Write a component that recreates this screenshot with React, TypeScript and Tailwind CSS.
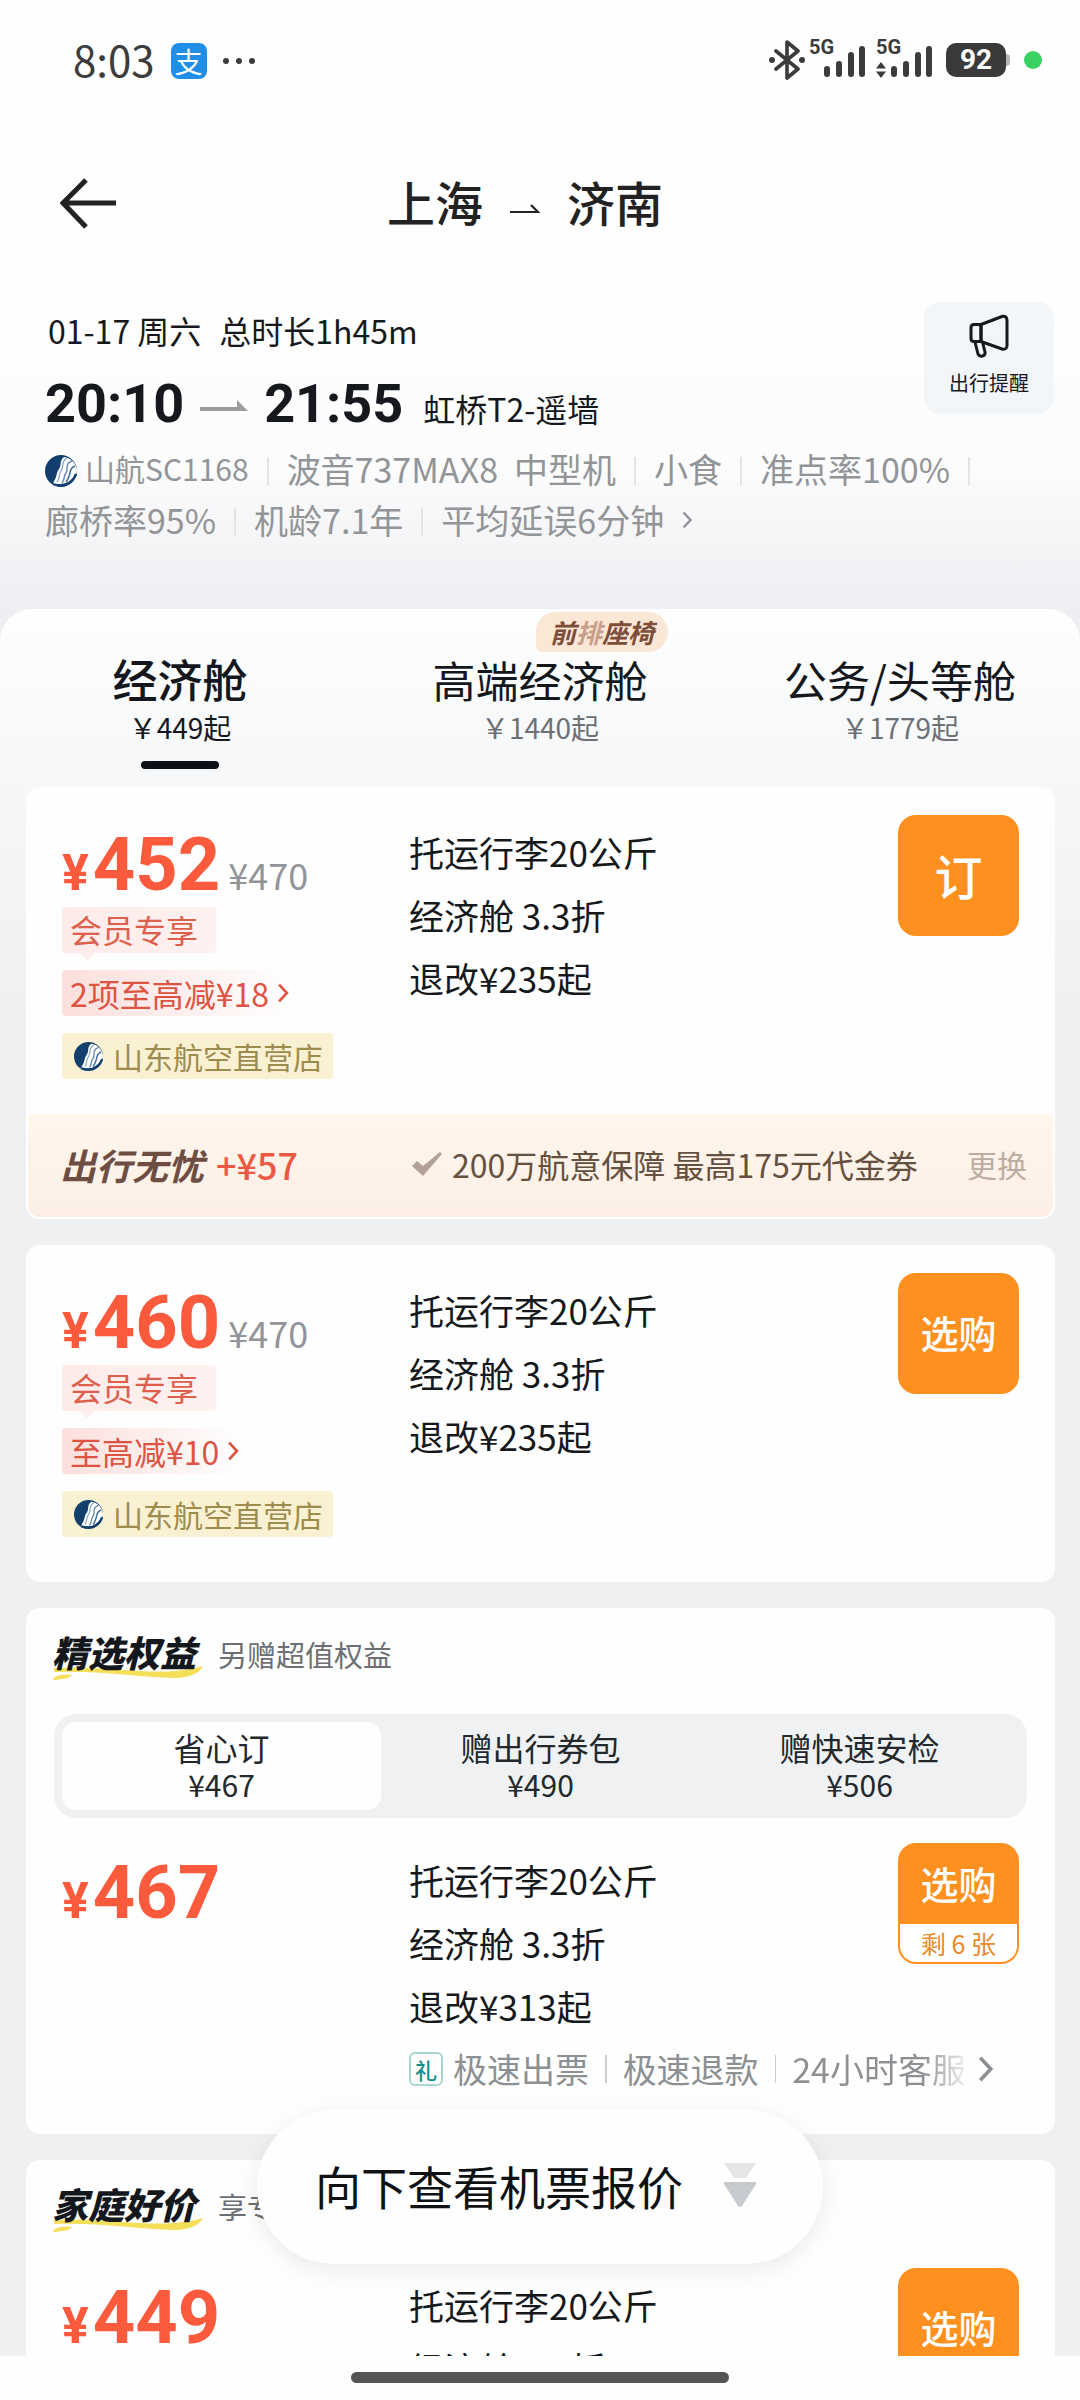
import React, { useState } from 'react';
import clsx from 'clsx';

const cabins = [
  { name: '经济舱', price: '￥449起' },
  { name: '高端经济舱', price: '￥1440起', badge: true },
  { name: '公务/头等舱', price: '￥1779起' },
];

const bundles = [
  { name: '省心订', price: '¥467' },
  { name: '赠出行券包', price: '¥490' },
  { name: '赠快速安检', price: '¥506' },
];

const AirlineLogo = ({ className }: { className: string }) => (
  <svg viewBox="0 0 32 32" className={className} aria-hidden="true">
    <circle cx="16" cy="16" r="16" fill="#123f6e" />
    <path d="M19 2c-5 4-2 8-5 12s-2 8-5 12l-1 3h12c7-1 12-7 12-14C31 8 26 3 19 2z" fill="#fff" />
    <path d="M22 3c-7 4-2 8-6 13-3 4-1 8-4 11" fill="none" stroke="#7f9fbd" strokeWidth="1.2" />
    <path d="M27 6c-8 3-3 8-6 12-3 4-1 7-4 10" fill="none" stroke="#5c83a9" strokeWidth="1.4" />
    <path d="M30 11c-6 2-4 6-6 10-1 3-2 5-3 6" fill="none" stroke="#3f6c98" strokeWidth="1.6" />
    <path d="M8 29c8 3 19 1 23-10" fill="none" stroke="#123f6e" strokeWidth="2.4" />
  </svg>
);

const Chevron = ({ className }: { className: string }) => (
  <svg viewBox="0 0 10 18" className={className} fill="none" stroke="currentColor" strokeWidth="2.4" aria-hidden="true">
    <path d="M1.5 1.5 8.5 9l-7 7.5" />
  </svg>
);

const Signal = ({ data }: { data?: boolean }) => (
  <span className="relative block h-10 w-14">
    <span className="absolute left-0 top-0 font-[Roboto] text-[20px] font-bold leading-[14px]">5G</span>
    <svg viewBox="0 0 56 40" className="h-10 w-14" fill="none" stroke="currentColor" strokeWidth="6" strokeLinecap="round" aria-hidden="true">
      <path d="M18 29v5M30 24v10M42 15v19M53 9v25" />
      {data && <path d="M0 28.500 5 22l5 6.500zM0 31.500 5 38l5-6.500z" fill="currentColor" stroke="none" />}
    </svg>
  </span>
);

const StatusBar = () => (
  <div className="flex h-[122px] items-center justify-between pl-[73px] pr-[38px] text-[#3c3c3c]">
    <div className="flex items-center gap-4">
      <span className="pb-1 text-[42px] leading-none">8:03</span>
      <span className="flex h-9 w-9 items-center justify-center rounded-lg bg-[#1f8ee6] text-[28px] leading-none text-white">
        支
      </span>
      <svg viewBox="0 0 32 6" className="h-[6px] w-8" fill="currentColor" aria-hidden="true">
        <circle cx="3" cy="3" r="3" />
        <circle cx="16" cy="3" r="3" />
        <circle cx="29" cy="3" r="3" />
      </svg>
    </div>
    <div className="flex items-center pb-[2px]">
      <svg viewBox="0 0 36 40" className="mr-1 h-10 w-9" fill="none" stroke="currentColor" strokeWidth="3.600" strokeLinejoin="round" strokeLinecap="round" aria-hidden="true">
        <path d="M7 11l22 18-11 9V2l11 9L7 29" />
        <circle cx="3" cy="20" r="3" fill="currentColor" stroke="none" />
        <circle cx="33" cy="20" r="3" fill="currentColor" stroke="none" />
      </svg>
      <Signal />
      <span className="w-[11px]" />
      <Signal data />
      <span className="ml-[14px] flex h-[34px] w-[60px] items-center justify-center rounded-[10px] bg-[#3a3a3a] font-[Roboto] text-[28px] font-bold leading-none text-white">
        92
      </span>
      <span className="h-3 w-1 rounded-r bg-[#b5b5b5]" />
      <span className="ml-[14px] h-[18px] w-[18px] rounded-full bg-[#3ad163]" />
    </div>
  </div>
);

const TitleBar = () => (
  <header className="grid h-[164px] grid-cols-[1fr_auto_1fr] items-center pl-[60px] pr-[90px] text-[#222]">
    <button type="button" aria-label="返回" className="h-[52px] w-14">
      <svg viewBox="0 0 56 52" className="h-[52px] w-14" fill="none" stroke="currentColor" strokeWidth="5">
        <path d="M56 25H4M26 2 3 25l23 24" />
      </svg>
    </button>
    <h1 className="flex items-center pb-[6px] text-[48px] font-medium leading-none">
      上海
      <svg viewBox="0 0 30 10" className="mx-[27px] mt-4 h-[10px] w-[30px]" fill="none" stroke="currentColor" strokeWidth="2.200" aria-hidden="true">
        <path d="M0 8h28l-7-7" />
      </svg>
      济南
    </h1>
    <span />
  </header>
);

const Detail = ({ children, last }: { children: React.ReactNode; last?: boolean }) => (
  <span className="flex items-center text-[34px] leading-[51px]">
    {children}
    {!last && <span className="mx-[18px] mt-1 h-7 w-[2px] bg-[#e3e4e6]" />}
  </span>
);

const FlightInfo = () => (
  <section className="relative px-[45px] pb-16 pt-5 text-[#15191d]">
    <p className="flex gap-[18px] pl-[3px] text-[32px] leading-[48px]">
      <span>01-17 周六</span>
      <span>总时长1h45m</span>
    </p>
    <div className="flex items-baseline pt-[15px] leading-[70px]">
      <time className="font-[Roboto] text-[54px] font-bold">20:10</time>
      <svg viewBox="0 0 48 22" className="mx-4 h-[22px] w-12 text-[#9b9ea1]" fill="currentColor" aria-hidden="true">
        <path d="M0 7h37V0l11 11H0z" />
      </svg>
      <time className="font-[Roboto] text-[54px] font-bold">21:55</time>
      <span className="ml-5 text-[32px]">虹桥T2-遥墙</span>
    </div>
    <div className="flex flex-wrap items-center text-[#929598]">
      <Detail>
        <AirlineLogo className="mr-2 mt-1 h-8 w-8" />
        <span className="text-[30px]">山航SC1168</span>
      </Detail>
      <Detail>
        <span className="mr-4">波音737MAX8</span>
        中型机
      </Detail>
      <Detail>小食</Detail>
      <Detail>准点率100%</Detail>
      <Detail>廊桥率95%</Detail>
      <Detail>机龄7.1年</Detail>
      <Detail last>
        平均延误6分钟
        <Chevron className="ml-[18px] h-[18px] w-[10px]" />
      </Detail>
    </div>
    <button type="button" className="absolute right-[26px] top-4 flex h-[112px] w-[130px] flex-col items-center rounded-2xl bg-[#f3f6f8] pt-3">
      <svg viewBox="0 0 40 44" className="h-11 w-10" fill="none" stroke="currentColor" strokeWidth="3" strokeLinejoin="round" aria-hidden="true">
        <path d="M12 10.500 33 2.500q5-1 5 4v25q0 4.500-5 3.500L12 27.500z" />
        <path d="M12 10.500H5q-3 0-3 3v11q0 3 3 3h7z" />
        <path d="M6 28l3 12q1.500 3 4.500 2t2.500-4l-2.500-10" />
      </svg>
      <span className="mt-[10px] text-[20px] leading-[30px]">出行提醒</span>
    </button>
  </section>
);

const CabinTabs = () => {
  const [active, setActive] = useState(0);

  return (
    <div role="tablist" className="grid grid-cols-3">
      {cabins.map((cabin, i) => (
        <button
          key={cabin.name}
          type="button"
          role="tab"
          aria-selected={i === active}
          onClick={() => setActive(i)}
          className="relative flex flex-col items-center pb-[18px] pt-10"
        >
          {cabin.badge && (
            <span className="absolute left-1/2 top-[3px] -ml-1 rounded-[20px] rounded-bl-[6px] bg-[#fbe7d6] px-[14px] text-[26px] font-bold italic leading-[40px] text-[#7d4e3b]">
              前<span className="text-[#c99f8b]">排</span>座椅
            </span>
          )}
          <span className={clsx('leading-[60px] text-[#14181c]', i === active ? 'text-[45px] font-medium' : 'text-[43px]')}>
            {cabin.name}
          </span>
          <span className={clsx('text-[28px] leading-9', i === active ? 'text-[#14181c]' : 'text-[#6d7074]')}>
            {cabin.price}
          </span>
          <span className={clsx('mt-4 h-2 w-[78px] rounded', i === active && 'bg-[#0b1117]')} />
        </button>
      ))}
    </div>
  );
};

const Price = ({ value, original }: { value: string; original?: string }) => (
  <div className="flex h-[92px] items-baseline pt-[6px] text-[#fb5a3c]">
    <span className="font-[Roboto] text-[50px] font-bold leading-none">¥</span>
    <strong className="ml-1 font-[Roboto] text-[74px] font-bold leading-[88px]">{value}</strong>
    {original && <span className="ml-2 text-[36px] leading-none text-[#919498]">¥{original}</span>}
  </div>
);

const MemberTags = ({ discount }: { discount: string }) => (
  <div className="flex flex-col items-start gap-[17px]">
    <span className="relative h-[46px] rounded bg-linear-to-r from-[#fdebe9] to-[#fef2f1] pl-2 pr-[18px] text-[32px] leading-[44px] text-[#dd604c]">
      会员专享
      <svg viewBox="0 0 14 8" className="absolute left-[18px] top-full h-2 w-[14px]" fill="#fdefed" aria-hidden="true">
        <path d="M0 0h14L7 8z" />
      </svg>
    </span>
    <button type="button" className="flex h-[46px] items-center rounded bg-linear-to-r from-[#fbdfdc] to-transparent pl-2 text-[32px] leading-[44px] text-[#dd5442]">
      {discount}
      <Chevron className="ml-2 h-5 w-3" />
    </button>
    <span className="flex h-[46px] items-center rounded bg-[#faf0d2] pl-3 pr-[10px] text-[30px] leading-[44px] text-[#9d8c4d]">
      <AirlineLogo className="mr-[10px] h-[29px] w-[29px]" />
      山东航空直营店
    </span>
  </div>
);

type OfferProps = {
  price: string;
  original?: string;
  discount?: string;
  refund: string;
  action?: string;
  stock?: string;
  perks?: boolean;
};

const Offer = ({ price, original, discount, refund, action = '选购', stock, perks }: OfferProps) => (
  <div className="grid grid-cols-[347px_1fr_auto] items-start px-9">
    <div>
      <Price value={price} original={original} />
      {discount && <MemberTags discount={discount} />}
    </div>
    <div className="pt-[5px] text-[35px] leading-[63px] text-[#15191c]">
      <p>托运行李20公斤</p>
      <p>经济舱 3.3折</p>
      <p>退改¥{refund}起</p>
    </div>
    <button
      type="button"
      className={clsx(
        'flex h-[121px] w-[121px] flex-col overflow-hidden rounded-[18px] bg-[#fe9020] font-medium text-white',
        stock && 'border-2 border-[#fe9020]'
      )}
    >
      <span className={clsx('flex w-full flex-1 items-center justify-center pb-1 leading-none', action.length > 1 ? 'text-[38px]' : 'text-[48px]')}>
        {action}
      </span>
      {stock && <span className="w-full bg-white text-[25px] font-normal leading-[38px] text-[#ea8a2a]">{stock}</span>}
    </button>
    {perks && (
      <div className="col-span-2 col-start-2 flex items-center pr-[26px] text-[34px] leading-[63px] text-[#8d9093]">
        <span className="mr-[10px] flex h-[34px] w-[34px] shrink-0 items-center justify-center rounded-md border-2 border-[#a9d5d1] text-[22px] font-medium leading-none text-[#12918a]">
          礼
        </span>
        <div className="flex flex-1 items-center overflow-hidden whitespace-nowrap">
          极速出票
          <span className="mx-4 h-7 w-[2px] bg-[#c9cbcd]" />
          极速退款
          <span className="mx-4 h-7 w-[2px] bg-[#c9cbcd]" />
          <span className="bg-linear-to-r from-[#8d9093] from-75% to-[#f0f0f0] bg-clip-text text-transparent">24小时客服</span>
        </div>
        <Chevron className="ml-3 h-7 w-[15px] shrink-0" />
      </div>
    )}
  </div>
);

const Card = ({ children, className }: { children: React.ReactNode; className?: string }) => (
  <section className={clsx('overflow-hidden rounded-[14px] bg-[#fefefe]', className)}>{children}</section>
);

const CardTitle = ({ title, note }: { title: string; note: string }) => (
  <div className="flex items-center pl-[26px]">
    <h2 className="relative text-[36px] font-black italic leading-[50px] text-[#14181c]">
      <svg viewBox="0 0 152 14" className="absolute left-0 top-10 h-[14px] w-[152px]" fill="#f5de58" aria-hidden="true">
        <path d="M2 2c40-3 90 6 120 3 14-1 22-3 29-5-3 7-14 12-28 12C88 11 40 4 2 6z" />
        <path d="M1 13c5-5 11-5 19-4-3 4-10 4-19 5z" />
      </svg>
      <span className="relative">{title}</span>
    </h2>
    <span className="ml-[22px] whitespace-nowrap pt-[6px] text-[29px] leading-[44px] text-[#6c6f73]">{note}</span>
  </div>
);

const BundleTabs = () => {
  const [active, setActive] = useState(0);

  return (
    <div role="tablist" className="mx-7 mt-[38px] grid grid-cols-3 rounded-[22px] bg-[#eff1f2] p-2">
      {bundles.map((bundle, i) => (
        <button
          key={bundle.name}
          type="button"
          role="tab"
          aria-selected={i === active}
          onClick={() => setActive(i)}
          className={clsx('flex h-[88px] flex-col items-center rounded-[14px] pt-[6px] text-[#22282b]', i === active && 'bg-[#fefefe]')}
        >
          <span className="text-[32px] leading-[38px]">{bundle.name}</span>
          <span className="text-[30px] leading-9">{bundle.price}</span>
        </button>
      ))}
    </div>
  );
};

const App = () => {
  return (
    <div lang="zh-CN" className="relative flex h-screen flex-col overflow-hidden bg-[#fefefe] font-['Noto_Sans_CJK_SC',sans-serif]">
      <StatusBar />
      <TitleBar />
      <main className="min-h-0 flex-1 overflow-y-auto bg-linear-to-b from-[#fefefe] from-[0px] via-[#fcfcfd] via-[180px] to-[#eeeff2] to-[320px] [scrollbar-width:none]">
        <FlightInfo />
        <div className="rounded-t-[32px] bg-linear-to-b from-[#fefefe] from-[0px] via-[#f4f6f8] via-[200px] to-[#eef0f2] to-[420px] pb-7">
          <CabinTabs />
          <div className="flex flex-col gap-[26px] pl-[26px] pr-[25px]">
            <Card className="pt-7">
              <Offer price="452" original="470" discount="2项至高减¥18" refund="235" action="订" />
              <div className="mt-[35px] flex h-[105px] items-center rounded-b-[14px] border-2 border-t-0 border-white bg-linear-to-b from-[#fff6ec] to-[#fdefe6] pb-1 pl-8 pr-[26px]">
                <div className="flex w-[352px] items-center whitespace-nowrap">
                  <strong className="text-[36px] font-bold italic leading-none text-[#6e4e42]">出行无忧</strong>
                  <span className="ml-3 text-[36px] font-medium leading-none text-[#ec5843]">+¥57</span>
                </div>
                <svg viewBox="0 0 30 24" className="mr-[10px] h-6 w-[30px] shrink-0" fill="#b3a196" aria-hidden="true">
                  <path d="M0 14l5-5 6 5L28 0l2 2-19 22z" />
                </svg>
                <span className="flex-1 whitespace-nowrap text-[32px] leading-none text-[#66503f]">200万航意保障 最高175元代金券</span>
                <button type="button" className="text-[30px] leading-none text-[#bcaca1]">更换</button>
              </div>
            </Card>
            <Card className="pb-[45px] pt-7">
              <Offer price="460" original="470" discount="至高减¥10" refund="235" />
            </Card>
            <Card className="pb-[34px] pt-[18px]">
              <CardTitle title="精选权益" note="另赠超值权益" />
              <BundleTabs />
              <div className="mt-[25px]">
                <Offer price="467" refund="313" stock="剩 6 张" perks />
              </div>
            </Card>
            <Card className="pb-[34px] pt-[18px]">
              <CardTitle title="家庭好价" note="享专属优惠" />
              <div className="mt-10">
                <Offer price="449" refund="235" />
              </div>
            </Card>
          </div>
        </div>
      </main>
      <button
        type="button"
        className="absolute bottom-[136px] left-1/2 flex h-[154px] -translate-x-1/2 items-center whitespace-nowrap rounded-full bg-[#fefefe] pb-1 pl-[58px] pr-[66px] text-[46px] leading-none text-[#0f1214] shadow-[0_6px_24px_rgba(0,0,0,0.08)]"
      >
        向下查看机票报价
        <svg viewBox="0 0 34 46" className="ml-10 h-[46px] w-[34px]" aria-hidden="true">
          <path d="M1 1h32L23 16H11z" fill="#e3e5e7" />
          <path d="M2 20h30q2 0 1 2L19 44q-2 2-4 0L1 22q-1-2 1-2z" fill="#c6c9cd" />
        </svg>
      </button>
      <footer className="flex h-11 justify-center bg-[#fefefe] pt-4">
        <span className="h-[11px] w-[378px] rounded-full bg-[#555]" />
      </footer>
    </div>
  );
};

export default App;
